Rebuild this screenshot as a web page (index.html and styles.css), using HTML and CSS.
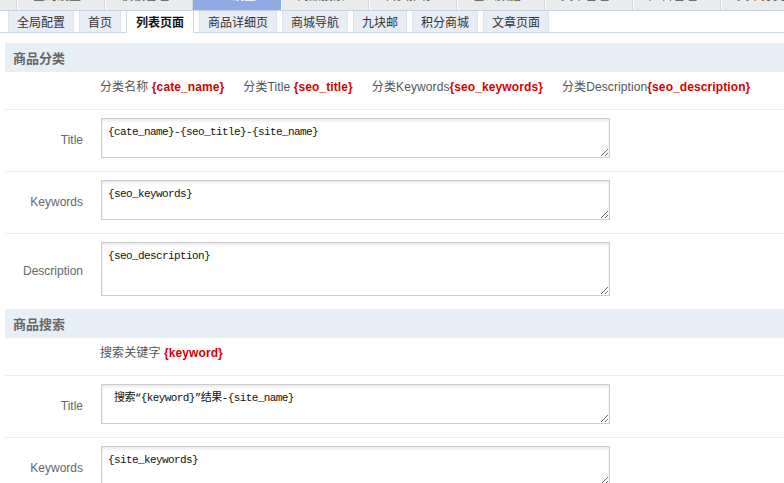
FILE: index.html
```html
<!DOCTYPE html>
<html lang="zh-CN">
<head>
<meta charset="utf-8">
<title>SEO设置</title>
<link rel="stylesheet" href="styles.css">
</head>
<body>
<div class="topnav">
  <div class="tn tn-cap"></div>
  <div class="tn"><span>全局设置 <i>× ×</i></span></div>
  <div class="tn"><span>模板管理 <i>× ×</i></span></div>
  <div class="tn tn-active"><span>SEO设置 <i>× ×</i></span></div>
  <div class="tn"><span>商品搜索 <i>× ×</i></span></div>
  <div class="tn"><span>首页推荐 <i>× ×</i></span></div>
  <div class="tn"><span>基础数据 <i>× ×</i></span></div>
  <div class="tn"><span>文章管理 <i>× ×</i></span></div>
  <div class="tn"><span>广告管理 <i>× ×</i></span></div>
  <div class="tn"><span>文章分类</span></div>
</div>
<div class="tabs">
  <a class="tab">全局配置</a>
  <a class="tab">首页</a>
  <a class="tab tab-active">列表页面</a>
  <a class="tab">商品详细页</a>
  <a class="tab">商城导航</a>
  <a class="tab">九块邮</a>
  <a class="tab">积分商城</a>
  <a class="tab">文章页面</a>
</div>
<div class="main">
  <div class="section-head">商品分类</div>
  <div class="row row-vars">
    <div class="label"></div>
    <div class="field vars">
      <span class="var">分类名称 <b>{cate_name}</b></span>
      <span class="var">分类Title <b>{seo_title}</b></span>
      <span class="var">分类Keywords<b>{seo_keywords}</b></span>
      <span class="var">分类Description<b>{seo_description}</b></span>
    </div>
  </div>
  <div class="row">
    <div class="label">Title</div>
    <div class="field"><textarea class="ta">{cate_name}-{seo_title}-{site_name}</textarea></div>
  </div>
  <div class="row">
    <div class="label">Keywords</div>
    <div class="field"><textarea class="ta">{seo_keywords}</textarea></div>
  </div>
  <div class="row row-last">
    <div class="label">Description</div>
    <div class="field"><textarea class="ta ta-tall">{seo_description}</textarea></div>
  </div>

  <div class="section-head">商品搜索</div>
  <div class="row row-vars">
    <div class="label"></div>
    <div class="field vars">
      <span class="var">搜索关键字 <b>{keyword}</b></span>
    </div>
  </div>
  <div class="row">
    <div class="label">Title</div>
    <div class="field"><textarea class="ta"> 搜索“{keyword}”结果-{site_name}</textarea></div>
  </div>
  <div class="row">
    <div class="label">Keywords</div>
    <div class="field"><textarea class="ta">{site_keywords}</textarea></div>
  </div>
</div>
</body>
</html>
```
FILE: styles.css
```css
html, body {
  margin: 0;
  padding: 0;
  background: #fff;
  overflow: hidden;
}
body {
  font-family: "Liberation Sans", "Noto Sans CJK SC", sans-serif;
  font-size: 12px;
  color: #555;
}

/* scrolled-off top navigation strip */
.topnav {
  display: flex;
  height: 10px;
  overflow: hidden;
  background: #e9ebec;
  border-bottom: 1px solid #c8d3df;
}
.tn {
  flex: 0 0 88px;
  border-left: 1px solid #f7f8f8;
  border-right: 1px solid #d3d7da;
  box-sizing: border-box;
  overflow: hidden;
}
.tn-cap {
  flex: 0 0 17px;
  border-left: 0;
}
.tn span {
  display: block;
  margin-top: -13px;
  padding-left: 15px;
  line-height: 15px;
  font-family: "Noto Sans CJK SC", sans-serif;
  font-size: 12px;
  color: #555;
  white-space: nowrap;
}
.tn i {
  font-style: normal;
  font-size: 9px;
  color: #bbb;
  margin-left: 6px;
}
.tn-active {
  background: #8eabe6;
  border-color: #8eabe6;
}
.tn-active span { color: #fff; }
.tn-active i { color: #e8eefb; }

/* secondary tabs */
.tabs {
  display: flex;
  gap: 5px;
  padding-left: 8px;
  height: 21px;
  border-bottom: 1px solid #cfd9e5;
}
.tab {
  display: block;
  padding: 0 8px;
  height: 21px;
  line-height: 21px;
  background: #e8ecf5;
  border: 1px solid #dde3ee;
  border-bottom: 0;
  border-top: 0;
  font-family: "Noto Sans CJK SC", sans-serif;
  font-size: 12px;
  color: #333;
  white-space: nowrap;
}
.tab-active {
  background: #fff;
  border-color: #cfd9e5;
  padding: 0 9px;
  height: 22px;
  font-weight: bold;
  color: #111;
}

/* main form */
.main {
  padding: 10px 0 0 5px;
}
.section-head {
  height: 29px;
  line-height: 29px;
  padding-left: 8px;
  background: #e8eef6;
  font-family: "Noto Sans CJK SC", sans-serif;
  font-size: 13px;
  font-weight: bold;
  color: #666;
}
.row {
  display: flex;
  align-items: center;
  padding: 8px 0 13px;
  border-bottom: 1px solid #ececec;
}
.row-last {
  border-bottom: 0;
}
.label {
  flex: 0 0 78px;
  padding-top: 3px;
  text-align: right;
  color: #666;
  font-size: 12px;
}
.field {
  padding-left: 17px;
}
.row-vars {
  padding: 8px 0 15px;
}
.vars {
  display: flex;
  gap: 19px;
  line-height: 14px;
  letter-spacing: 0.1px;
  color: #555;
  white-space: nowrap;
}
.var b {
  color: #d90000;
  font-weight: bold;
}
.ta {
  display: block;
  margin-left: 1px;
  box-sizing: border-box;
  width: 509px;
  height: 40px;
  padding: 6px 6px 2px;
  border: 1px solid #cccccc;
  box-shadow: inset 0 2px 3px rgba(0, 0, 0, 0.09);
  font-family: "Liberation Mono", "Noto Sans CJK SC", monospace;
  font-size: 11px;
  letter-spacing: -0.6px;
  line-height: 14px;
  color: #111;
  background: #fff;
  outline: none;
}
.ta-tall {
  height: 54px;
}
```
